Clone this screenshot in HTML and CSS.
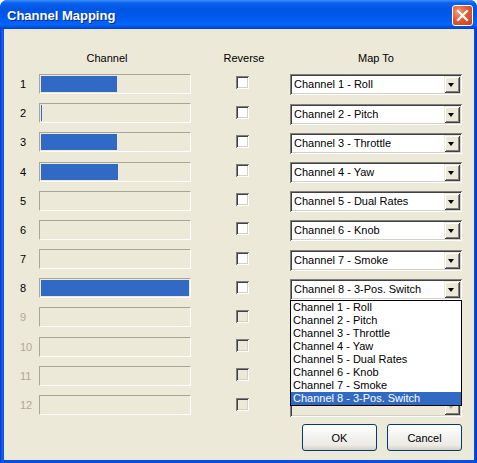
FILE: index.html
```html
<!DOCTYPE html>
<html lang="en">
<head>
  <meta charset="UTF-8">
  <title>Channel Mapping</title>
  <link rel="stylesheet" href="styles.css">
</head>
<body>
  <div class="window">
    <div class="titlebar">
      <span class="title">Channel Mapping</span>
      <button class="close" aria-label="Close">
        <svg width="13" height="13" viewBox="0 0 13 13">
          <path d="M2 2 L11 11 M11 2 L2 11" stroke="#fff" stroke-width="2.2" stroke-linecap="square" />
        </svg>
      </button>
    </div>

    <div class="client">
      <div class="grid">
        <div></div>
        <div class="head head-channel">Channel</div>
        <div class="head head-reverse">Reverse</div>
        <div class="head">Map To</div>

        <div class="num">1</div>
        <div class="bar"><div class="fill" style="width: 76px"></div></div>
        <div class="check"></div>
        <div class="combo"><span class="combo-text">Channel 1 - Roll</span><span class="combo-btn"></span></div>

        <div class="num">2</div>
        <div class="bar"><div class="fill" style="width: 1px"></div></div>
        <div class="check"></div>
        <div class="combo"><span class="combo-text">Channel 2 - Pitch</span><span class="combo-btn"></span></div>

        <div class="num">3</div>
        <div class="bar"><div class="fill" style="width: 76px"></div></div>
        <div class="check"></div>
        <div class="combo"><span class="combo-text">Channel 3 - Throttle</span><span class="combo-btn"></span></div>

        <div class="num">4</div>
        <div class="bar"><div class="fill" style="width: 77px"></div></div>
        <div class="check"></div>
        <div class="combo"><span class="combo-text">Channel 4 - Yaw</span><span class="combo-btn"></span></div>

        <div class="num">5</div>
        <div class="bar"></div>
        <div class="check"></div>
        <div class="combo"><span class="combo-text">Channel 5 - Dual Rates</span><span class="combo-btn"></span></div>

        <div class="num">6</div>
        <div class="bar"></div>
        <div class="check"></div>
        <div class="combo"><span class="combo-text">Channel 6 - Knob</span><span class="combo-btn"></span></div>

        <div class="num">7</div>
        <div class="bar"></div>
        <div class="check"></div>
        <div class="combo"><span class="combo-text">Channel 7 - Smoke</span><span class="combo-btn"></span></div>

        <div class="num">8</div>
        <div class="bar"><div class="fill" style="width: 148px"></div></div>
        <div class="check"></div>
        <div class="combo open">
          <span class="combo-text">Channel 8 - 3-Pos. Switch</span><span class="combo-btn"></span>
          <ul class="list">
            <li>Channel 1 - Roll</li>
            <li>Channel 2 - Pitch</li>
            <li>Channel 3 - Throttle</li>
            <li>Channel 4 - Yaw</li>
            <li>Channel 5 - Dual Rates</li>
            <li>Channel 6 - Knob</li>
            <li>Channel 7 - Smoke</li>
            <li class="selected">Channel 8 - 3-Pos. Switch</li>
          </ul>
        </div>

        <div class="num disabled">9</div>
        <div class="bar"></div>
        <div class="check disabled"></div>
        <div class="combo disabled"><span class="combo-text"></span><span class="combo-btn"></span></div>

        <div class="num disabled">10</div>
        <div class="bar"></div>
        <div class="check disabled"></div>
        <div class="combo disabled"><span class="combo-text"></span><span class="combo-btn"></span></div>

        <div class="num disabled">11</div>
        <div class="bar"></div>
        <div class="check disabled"></div>
        <div class="combo disabled"><span class="combo-text"></span><span class="combo-btn"></span></div>

        <div class="num disabled">12</div>
        <div class="bar"></div>
        <div class="check disabled"></div>
        <div class="combo disabled"><span class="combo-text"></span><span class="combo-btn"></span></div>
      </div>

      <div class="actions">
        <button class="btn">OK</button>
        <button class="btn">Cancel</button>
      </div>
    </div>
  </div>
</body>
</html>
```

FILE: styles.css
```css
/* Base */
:root {
  --face: #ece9d8;
  --select: #316ac5;
  --disabled: #aca899;
}

* {
  margin: 0;
  padding: 0;
  box-sizing: border-box;
}

body {
  font-family: "Liberation Sans", Arial, sans-serif;
  font-size: 11px;
  color: #000;
  background: #fff;
}

/* Window frame */
.window {
  width: 477px;
  height: 463px;
  display: flex;
  flex-direction: column;
  padding: 0 3px 3px 4px;
  background: linear-gradient(to right, #0831d9 0, #1660ec 2px, #0a4fdd 4px, #0a4fdd calc(100% - 3px), #0636c4 100%);
  border-radius: 7px 7px 0 0;
  overflow: hidden;
}

.titlebar {
  height: 29px;
  margin: 0 -3px 0 -4px;
  padding: 0 4px 0 7px;
  display: flex;
  align-items: center;
  justify-content: space-between;
  background: linear-gradient(to bottom, #3d8ffb 0, #0a62ee 3px, #0055e5 9px, #0058ea 55%, #0565fb 85%, #0050e0 94%, #003fc9 100%);
  border-radius: 7px 7px 0 0;
}

.title {
  color: #fff;
  font-weight: bold;
  font-size: 13px;
  text-shadow: 1px 1px #0b2b8a;
  margin-top: 1px;
}

.close {
  width: 21px;
  height: 21px;
  margin-top: 2px;
  border: 1px solid #fff;
  border-radius: 3px;
  background: radial-gradient(circle at 30% 30%, #f29a7c 0, #e25a35 45%, #c8401d 100%);
  display: flex;
  align-items: center;
  justify-content: center;
}

/* Client area */
.client {
  flex: 1;
  background: var(--face);
  display: flex;
  flex-direction: column;
}

.grid {
  display: grid;
  grid-template-columns: 35px 152px 99px 172px;
  grid-template-rows: 40.4px repeat(12, 29.2px);
  align-items: center;
}

.head {
  align-self: start;
  padding-top: 22.5px;
  line-height: 13px;
  text-align: center;
}

.head-channel {
  padding-right: 16px;
}

.head-reverse {
  padding-left: 7px;
}

.num {
  padding-left: 16px;
}

.num.disabled {
  color: var(--disabled);
}

/* Progress bar */
.bar {
  height: 20px;
  padding: 1px;
  border: 1px solid;
  border-color: #a8a698 #fff #fff #a8a698;
  background: var(--face);
}

.fill {
  height: 100%;
  background: var(--select);
}

/* Checkbox */
.check {
  width: 13px;
  height: 13px;
  margin-left: 45px;
  margin-top: -2px;
  background: #fff;
  box-shadow: inset 1px 1px #808080, inset -1px -1px #fff, inset 2px 2px #404040, inset -2px -2px #d4d0c8;
}

.check.disabled {
  background: var(--face);
}

/* Combo box */
.combo {
  position: relative;
  height: 21px;
  margin-top: 2px;
  padding: 2px;
  display: flex;
  background: #fff;
  box-shadow: inset 1px 1px #808080, inset -1px -1px #fff, inset 2px 2px #404040, inset -2px -2px #d4d0c8;
}

.combo.disabled {
  background: var(--face);
}

.combo-text {
  flex: 1;
  padding-left: 2px;
  line-height: 17px;
}

.combo-btn {
  width: 16px;
  height: 17px;
  position: relative;
  background: var(--face);
  box-shadow: inset 1px 1px #ece9d8, inset -1px -1px #404040, inset 2px 2px #fff, inset -2px -2px #808080;
}

.combo-btn::after {
  content: "";
  position: absolute;
  left: 4px;
  top: 7px;
  border-left: 3.5px solid transparent;
  border-right: 3.5px solid transparent;
  border-top: 4px solid #000;
}

.combo.disabled .combo-btn::after {
  border-top-color: var(--disabled);
}

/* Open drop-down list */
.list {
  position: absolute;
  top: 100%;
  left: 0;
  width: 172px;
  list-style: none;
  background: #fff;
  border: 1px solid #000;
  z-index: 10;
}

.list li {
  height: 13px;
  line-height: 13px;
  padding-left: 2px;
  white-space: nowrap;
}

.list .selected {
  background: var(--select);
  color: #fff;
}

/* Buttons */
.actions {
  display: flex;
  justify-content: flex-end;
  gap: 10px;
  padding: 4.7px 12px 0 0;
}

.btn {
  width: 75px;
  height: 27px;
  font-family: inherit;
  font-size: 11px;
  color: #000;
  border: 1px solid #003c74;
  border-radius: 3px;
  background: linear-gradient(to bottom, #fff 0, #f4f4f0 40%, #ecebe6 80%, #d6d0c5 100%);
}
```
